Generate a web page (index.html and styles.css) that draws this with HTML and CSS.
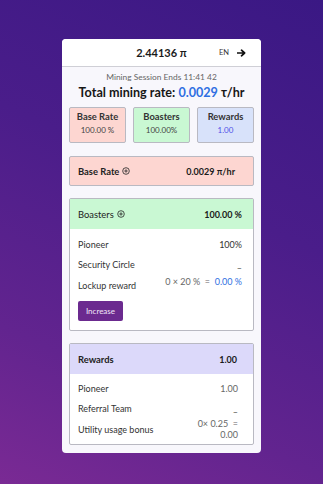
FILE: index.html
```html
<!DOCTYPE html>
<html>
<head>
<meta charset="utf-8">
<link rel="stylesheet" href="styles.css">
</head>
<body>
<div class="card">
  <header class="top">
    <div></div>
    <div class="balance">2.44136 π</div>
    <div class="top-right">
      <span class="lang">EN</span>
      <svg class="arrow" width="9" height="8" viewBox="0 0 9 8"><path d="M0.5 4H7M4.5 1.2L7.6 4L4.5 6.8" fill="none" stroke="#111" stroke-width="1.7" stroke-linecap="round" stroke-linejoin="round"/></svg>
    </div>
  </header>
  <main class="content">
    <div class="session">Mining Session Ends 11:41 42</div>
    <div class="total">Total mining rate: <span class="blue">0.0029</span> τ/hr</div>
    <div class="summary">
      <div class="sbox pink"><div class="st">Base Rate</div><div class="sv">100.00 %</div></div>
      <div class="sbox green"><div class="st">Boasters</div><div class="sv">100.00%</div></div>
      <div class="sbox blueish"><div class="st">Rewards</div><div class="sv violet">1.00</div></div>
    </div>
    <div class="panel pink base">
      <span class="ptitle">Base Rate <svg class="plus" width="8" height="8" viewBox="0 0 8 8"><circle cx="4" cy="4" r="3.3" fill="none" stroke="#222" stroke-width="0.8"/><path d="M4 2.3V5.7M2.3 4H5.7" stroke="#222" stroke-width="0.8"/></svg></span>
      <span class="pval">0.0029 π/hr</span>
    </div>
    <section class="block">
      <div class="bhead green boost">
        <span class="ptitle">Boasters <svg class="plus" width="8" height="8" viewBox="0 0 8 8"><circle cx="4" cy="4" r="3.3" fill="none" stroke="#222" stroke-width="0.8"/><path d="M4 2.3V5.7M2.3 4H5.7" stroke="#222" stroke-width="0.8"/></svg></span>
        <span class="pval">100.00 %</span>
      </div>
      <div class="bbody boostbody">
        <div class="row"><span>Pioneer</span><span>100%</span></div>
        <div class="row"><span>Security Circle</span><span class="dash down">–</span></div>
        <div class="row"><span class="down1">Lockup reward</span><span class="grey up">0 × 20 % &nbsp;=&nbsp; <span class="blue">0.00 %</span></span></div>
        <button class="btn">Increase</button>
      </div>
    </section>
    <section class="block rewards">
      <div class="bhead lav rew">
        <span class="ptitle">Rewards</span>
        <span class="pval">1.00</span>
      </div>
      <div class="bbody rewbody">
        <div class="row"><span>Pioneer</span><span class="grey">1.00</span></div>
        <div class="row"><span>Referral Team</span><span class="dash down">–</span></div>
        <div class="row util"><span>Utility usage bonus</span><span class="grey wrapval">0× 0.25 &nbsp;=<br>0.00</span></div>
      </div>
    </section>
  </main>
</div>
</body>
</html>
```
FILE: styles.css
```css
* { box-sizing: border-box; }
html, body { margin: 0; padding: 0; }
body {
  width: 323px;
  height: 484px;
  overflow: hidden;
  font-family: Lato, "Noto Sans", sans-serif;
  color: #222;
  background: linear-gradient(205deg, #3a1884 0%, #4a1d8a 40%, #62248f 75%, #7a2a94 100%);
  padding-top: 39px;
}
.card {
  width: 199px;
  margin: 0 auto;
  background: #f8f7fc;
  border-radius: 4px;
  overflow: hidden;
}
.top {
  height: 28px;
  background: #fff;
  border-bottom: 1px solid #cfcfd6;
  display: grid;
  grid-template-columns: 1fr auto 1fr;
  align-items: center;
}
.balance { font-weight: 700; font-size: 11px; color: #1a1a1a; }
.top-right {
  display: flex;
  justify-content: flex-end;
  align-items: center;
  gap: 8px;
  padding-right: 15px;
}
.lang { font-size: 7.5px; color: #333; }
.arrow { display: block; }
.content { padding: 0 7px 8px; }
.session {
  text-align: center;
  font-size: 8.4px;
  color: #666;
  padding-top: 5px;
  line-height: 11px;
}
.total {
  text-align: center;
  font-size: 12.6px;
  font-weight: 700;
  color: #161616;
  line-height: 16px;
  margin-top: 2px;
}
.blue { color: #2f6fe2; }
.summary {
  display: grid;
  grid-template-columns: 1fr 1fr 1fr;
  gap: 7px;
  margin-top: 6px;
}
.sbox {
  height: 36px;
  border: 1px solid #b9b9c2;
  border-radius: 2px;
  text-align: center;
  padding-top: 3px;
}
.st { font-size: 9.4px; font-weight: 700; color: #333; line-height: 12px; }
.sv { font-size: 8px; color: #444; line-height: 12px; margin-top: 1px; }
.violet { color: #4f4fe8; }
.pink { background: #fdd6d1; }
.green { background: #c9f8d3; }
.blueish { background: #d8e2fa; }
.lav { background: #dcd9fa; }
.panel {
  margin-top: 13px;
  height: 30px;
  border: 1px solid #b9b9c2;
  border-radius: 2px;
  display: flex;
  justify-content: space-between;
  align-items: center;
  padding: 0 18px 0 8px;
}
.ptitle { font-size: 9.4px; color: #222; display: flex; align-items: center; gap: 3px; }
.base .ptitle { font-weight: 700; }
.pval { font-size: 9px; font-weight: 700; color: #1a1a1a; }
.plus { display: block; }
.block {
  margin-top: 12px;
  border: 1px solid #b9b9c2;
  border-radius: 2px;
  background: #fff;
}
.bhead {
  height: 30px;
  display: flex;
  justify-content: space-between;
  align-items: center;
  padding: 0 11px 0 8px;
}
.rew { padding-right: 16px; }
.rew .ptitle { font-weight: 700; }
.bbody { padding: 5px 11px 9px 8px; }
.rewbody { padding: 4px 15px 4px 8px; }
.row {
  display: flex;
  justify-content: space-between;
  align-items: center;
  font-size: 9px;
  color: #333;
  height: 20px;
}
.grey { color: #666; }
.dash { color: #555; }
.down { position: relative; top: 3px; }
.down1 { position: relative; top: 1px; }
.up { position: relative; top: -3px; }
.btn {
  margin-top: 7px;
  width: 45px;
  height: 20px;
  border: none;
  border-radius: 2px;
  background: #6b2a8f;
  color: #f0e6f7;
  font-family: Lato, "Noto Sans", sans-serif;
  font-size: 8px;
  padding: 0;
  display: block;
}
.util { height: 22px; }
.wrapval { text-align: right; line-height: 11px; }
```
